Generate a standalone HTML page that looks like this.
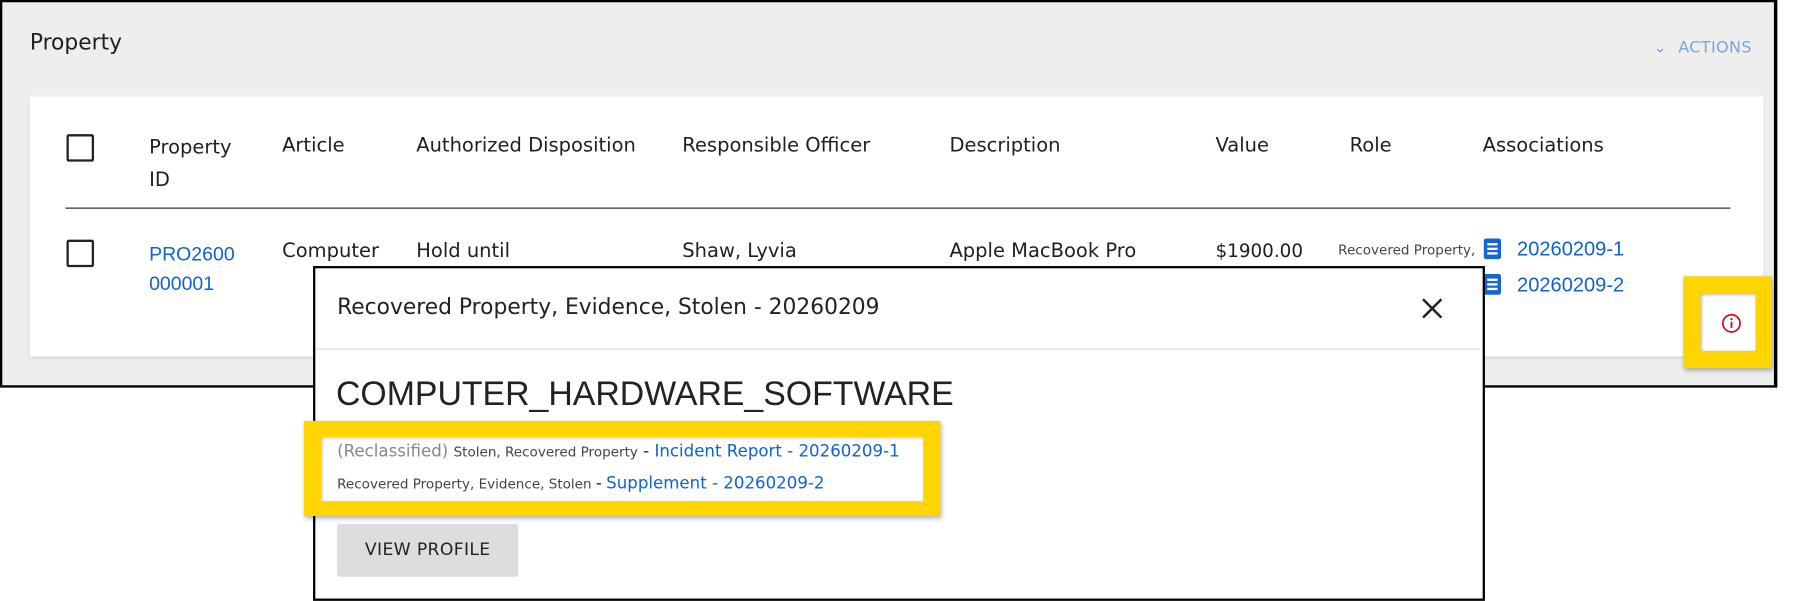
<!DOCTYPE html>
<html><head><meta charset="utf-8"><style>
html,body{margin:0;padding:0;background:#fff;width:1798px;height:600px;overflow:hidden}
#w{position:absolute;left:0;top:0;width:1568px;height:523px;transform:scale(1.14668);transform-origin:0 0;font-family:"DejaVu Sans","Liberation Sans",sans-serif;color:#1f1f1f}
.a{position:absolute;white-space:nowrap}
.lib{font-family:"Liberation Sans",Arial,sans-serif}
.panel{position:absolute;left:0;top:0;width:1545px;height:334px;background:#eeeeee;border:2px solid #000;border-right-width:3px}
.card{position:absolute;left:26px;top:84px;width:1512px;height:227px;background:#fff;box-shadow:0 1px 3px rgba(0,0,0,.15)}
.h{font-size:17px;color:#1f1f1f}
.cb{position:absolute;width:20px;height:20px;border:2px solid #222;border-radius:2px}
.lnk{color:#0f62d0}
.doc{position:absolute;width:15px;height:18px;background:#1565d8;border-radius:2px}
.doc i{position:absolute;left:3px;height:2px;width:9px;background:#fff}
</style></head><body><div id="w">
<div class="panel"></div>
<div class="a" style="left:26px;top:26px;font-size:19px;">Property</div>
<div class="a" style="left:1442px;top:34px;font-size:14px;color:#7aa3e0;letter-spacing:.3px">&#8964;&nbsp; ACTIONS</div>
<div class="card"></div>
<div class="cb" style="left:58px;top:117px"></div>
<div class="a h" style="left:130px;top:115px;line-height:28px">Property<br>ID</div>
<div class="a h" style="left:246px;top:117px">Article</div>
<div class="a h" style="left:363px;top:117px">Authorized Disposition</div>
<div class="a h" style="left:595px;top:117px">Responsible Officer</div>
<div class="a h" style="left:828px;top:117px">Description</div>
<div class="a h" style="left:1060px;top:117px">Value</div>
<div class="a h" style="left:1177px;top:117px">Role</div>
<div class="a h" style="left:1293px;top:117px">Associations</div>
<div class="a" style="left:57px;top:181px;width:1452px;height:1px;background:#222"></div>
<div class="cb" style="left:58px;top:209px"></div>
<div class="a lnk lib" style="left:130px;top:209px;line-height:26px;font-size:17px">PRO2600<br>000001</div>
<div class="a h" style="left:246px;top:209px">Computer</div>
<div class="a h" style="left:363px;top:209px">Hold until</div>
<div class="a h" style="left:595px;top:209px">Shaw, Lyvia</div>
<div class="a h" style="left:828px;top:209px">Apple MacBook Pro</div>
<div class="a h" style="left:1060px;top:209px;font-size:16px">$1900.00</div>
<div class="a" style="left:1167px;top:211px;font-size:11.8px;color:#444">Recovered Property,</div>
<div class="doc" style="left:1294px;top:208px"><i style="top:4px"></i><i style="top:8px"></i><i style="top:12px"></i></div>
<div class="a lnk lib" style="left:1323px;top:207px;font-size:17.5px">20260209-1</div>
<div class="doc" style="left:1294px;top:239px"><i style="top:4px"></i><i style="top:8px"></i><i style="top:12px"></i></div>
<div class="a lnk lib" style="left:1323px;top:238px;font-size:17.5px">20260209-2</div>
<div class="a" style="left:1468px;top:241px;width:77px;height:80px;background:#ffd500;box-shadow:1px 2px 4px rgba(0,0,0,.3)"></div>
<div class="a" style="left:1483px;top:256px;width:48px;height:50px;background:#fff;box-shadow:inset 1px 1px 3px rgba(0,0,0,.3)"></div>
<svg class="a" style="left:1501px;top:273px" width="18" height="18" viewBox="0 0 18 18"><circle cx="9" cy="9" r="7.5" fill="none" stroke="#d0101a" stroke-width="1.5"/><rect x="8.2" y="7.5" width="1.6" height="5.5" fill="#d0101a"/><circle cx="9" cy="5.3" r="1" fill="#d0101a"/></svg>
<div class="a" style="left:273px;top:232px;width:1018px;height:288px;background:#fff;border:2px solid #000"></div>
<div class="a" style="left:294px;top:257px;font-size:19px;color:#222">Recovered Property, Evidence, Stolen - 20260209</div>
<svg class="a" style="left:1239px;top:259px" width="20" height="20" viewBox="0 0 20 20"><path d="M2 2L18 18M18 2L2 18" stroke="#222" stroke-width="2.2"/></svg>
<div class="a" style="left:275px;top:304px;width:1016px;height:1px;background:#ddd"></div>
<div class="a lib" style="left:293px;top:327px;font-size:29.5px;color:#222">COMPUTER_HARDWARE_SOFTWARE</div>
<div class="a" style="left:265px;top:367px;width:555px;height:83px;background:#ffd500;box-shadow:1px 2px 4px rgba(0,0,0,.3)"></div>
<div class="a" style="left:280px;top:381px;width:525px;height:56px;background:#fff;box-shadow:inset 1px 1px 3px rgba(0,0,0,.25)"></div>
<div class="a" style="left:294px;top:386px;font-size:14.5px;color:#888">(Reclassified) <span style="font-size:11.8px;color:#444">Stolen, Recovered Property</span> <span style="color:#222">-</span> <span class="lnk">Incident Report - 20260209-1</span></div>
<div class="a" style="left:294px;top:414px;font-size:11.8px;color:#444">Recovered Property, Evidence, Stolen <span style="font-size:14.5px;color:#222">-</span> <span class="lnk" style="font-size:14.5px">Supplement - 20260209-2</span></div>
<div class="a" style="left:294px;top:457px;width:158px;height:46px;background:#dddddd;border-radius:2px"></div>
<div class="a" style="left:294px;top:470px;width:158px;text-align:center;font-size:15px;color:#222;letter-spacing:.3px">VIEW PROFILE</div>
</div></body></html>
